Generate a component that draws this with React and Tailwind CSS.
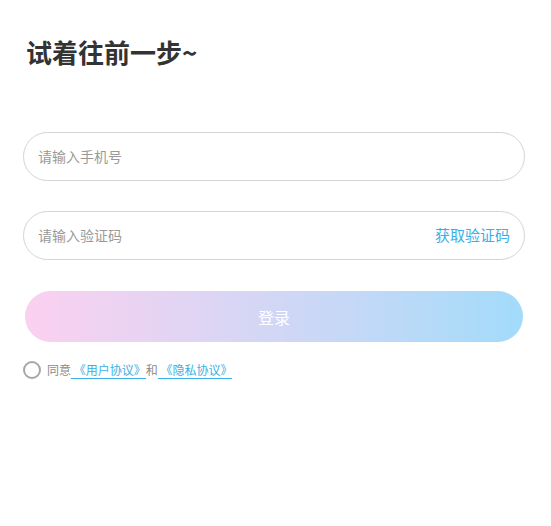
export default function App() {
  return (
    <div
      className="w-[551px] h-[526px] bg-white px-[23px] pt-[33px]"
      style={{ fontFamily: '"Noto Sans CJK SC", "Noto Sans", sans-serif' }}
    >
      {/* 标题 */}
      <h1 className="pl-[3px] text-[26px] font-bold leading-[38px] text-[#333]">
        试着往前一步~
      </h1>

      {/* 手机号 */}
      <div className="mt-[61px] flex h-[49px] w-[502px] items-center rounded-full border border-[#d4d4d4] px-[14px]">
        <input
          placeholder="请输入手机号"
          className="flex-1 bg-transparent text-[14px] text-[#333] outline-none placeholder:text-[#9a9a9a]"
        />
      </div>

      {/* 验证码 */}
      <div className="mt-[30px] flex h-[49px] w-[502px] items-center rounded-full border border-[#d4d4d4] pl-[14px] pr-[14px]">
        <input
          placeholder="请输入验证码"
          className="flex-1 bg-transparent text-[14px] text-[#333] outline-none placeholder:text-[#9a9a9a]"
        />
        <button className="text-[15px] text-[#3aafe6]">获取验证码</button>
      </div>

      {/* 登录 */}
      <button className="ml-[2px] mt-[31px] flex h-[51px] w-[498px] items-center justify-center rounded-full bg-gradient-to-r from-[#fbd0f0] to-[#a2dbfa] text-[16px] text-white">
        登录
      </button>

      {/* 协议 */}
      <div className="mt-[19px] flex items-center text-[12px] leading-[16px]">
        <span className="mr-[6px] inline-block h-[18px] w-[18px] rounded-full border-2 border-[#a6a6a6]" />
        <span className="text-[#8a8a8a]">同意</span>
        <span className="border-b border-[#3aafe6] text-[#3aafe6]">&nbsp;《用户协议》</span>
        <span className="text-[#8a8a8a]">和</span>
        <span className="border-b border-[#3aafe6] text-[#3aafe6]">&nbsp;《隐私协议》</span>
      </div>
    </div>
  );
}
